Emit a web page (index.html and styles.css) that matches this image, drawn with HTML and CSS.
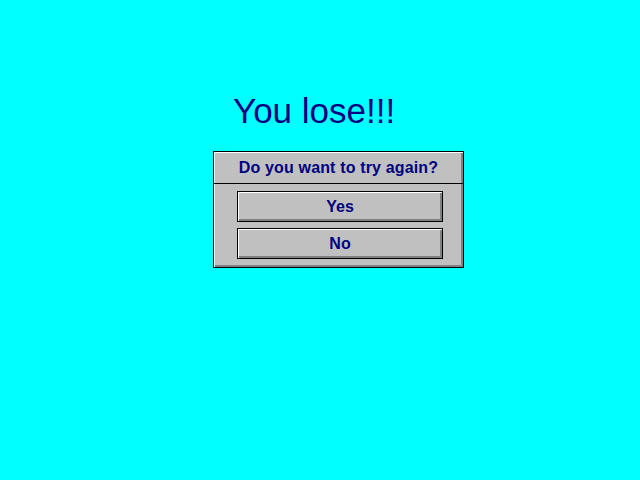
FILE: index.html
```html
<!DOCTYPE html>
<html>
<head>
<meta charset="utf-8">
<link rel="stylesheet" href="styles.css">
</head>
<body>
<div class="title">You lose!!!</div>
<div class="dialog">
  <div class="dialog-header">Do you want to try again?</div>
  <div class="dialog-body">
    <div class="btn">Yes</div>
    <div class="btn">No</div>
  </div>
</div>
</body>
</html>
```
FILE: styles.css
```css
html, body {
  margin: 0;
  padding: 0;
  background: #00ffff;
  width: 640px;
  height: 480px;
  overflow: hidden;
}
body {
  padding-top: 91px;
  box-sizing: border-box;
  font-family: "Liberation Sans", Arial, sans-serif;
  color: #000080;
}
.title {
  margin-left: 233px;
  font-size: 35px;
  line-height: 40px;
}
.dialog {
  margin-top: 20px;
  margin-left: 213px;
  width: 251px;
  height: 117px;
  box-sizing: border-box;
  border: 1px solid #000;
  background: #c0c0c0;
  box-shadow: inset 1px 1px 0 #fff, inset -2px -2px 0 #808080;
}
.dialog-header {
  height: 31px;
  line-height: 32px;
  overflow: hidden;
  border-bottom: 1px solid #000;
  text-align: center;
  font-size: 16px;
  font-weight: bold;
  letter-spacing: 0.15px;
}
.dialog-body {
  padding: 7px 0 0 23px;
  display: flex;
  flex-direction: column;
  gap: 6px;
}
.btn {
  width: 206px;
  height: 31px;
  box-sizing: border-box;
  border: 1px solid #000;
  background: #c0c0c0;
  box-shadow: inset 1px 1px 0 #fff, inset -2px -2px 0 #808080;
  text-align: center;
  line-height: 30px;
  font-size: 16px;
  font-weight: bold;
}
```
